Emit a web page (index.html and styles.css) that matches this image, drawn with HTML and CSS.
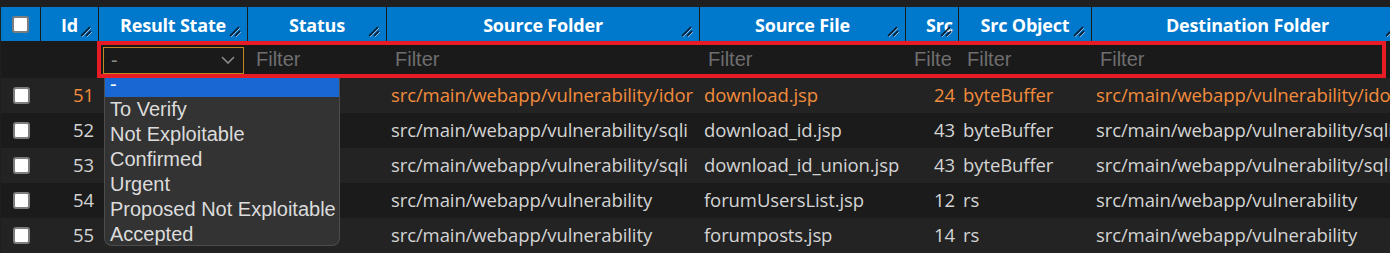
FILE: index.html
```html
<!DOCTYPE html>
<html lang="en">
<head>
    <meta charset="UTF-8">
    <meta name="viewport" content="width=device-width, initial-scale=1.0">
    <title>Results</title>
    <link rel="stylesheet" href="styles.css">
</head>
<body>
    <div class="grid-wrap">
        <div class="row head">
            <div class="hcell"><span class="check"></span></div>
            <div class="hcell">Id<svg class="grip" width="13" height="11" viewBox="0 0 13 11"><path d="M2 11 L11 2 M7 11 L12 6" stroke="#8fb4d6" stroke-width="1"/><path d="M1 10 L10 1 M6 10 L11 5" stroke="#0b1c2e" stroke-width="1.6"/></svg></div>
            <div class="hcell">Result State<svg class="grip" width="13" height="11" viewBox="0 0 13 11"><path d="M2 11 L11 2 M7 11 L12 6" stroke="#8fb4d6" stroke-width="1"/><path d="M1 10 L10 1 M6 10 L11 5" stroke="#0b1c2e" stroke-width="1.6"/></svg></div>
            <div class="hcell">Status<svg class="grip" width="13" height="11" viewBox="0 0 13 11"><path d="M2 11 L11 2 M7 11 L12 6" stroke="#8fb4d6" stroke-width="1"/><path d="M1 10 L10 1 M6 10 L11 5" stroke="#0b1c2e" stroke-width="1.6"/></svg></div>
            <div class="hcell">Source Folder<svg class="grip" width="13" height="11" viewBox="0 0 13 11"><path d="M2 11 L11 2 M7 11 L12 6" stroke="#8fb4d6" stroke-width="1"/><path d="M1 10 L10 1 M6 10 L11 5" stroke="#0b1c2e" stroke-width="1.6"/></svg></div>
            <div class="hcell">Source File<svg class="grip" width="13" height="11" viewBox="0 0 13 11"><path d="M2 11 L11 2 M7 11 L12 6" stroke="#8fb4d6" stroke-width="1"/><path d="M1 10 L10 1 M6 10 L11 5" stroke="#0b1c2e" stroke-width="1.6"/></svg></div>
            <div class="hcell"><span class="clip">Src Line</span><svg class="grip" width="13" height="11" viewBox="0 0 13 11"><path d="M2 11 L11 2 M7 11 L12 6" stroke="#8fb4d6" stroke-width="1"/><path d="M1 10 L10 1 M6 10 L11 5" stroke="#0b1c2e" stroke-width="1.6"/></svg></div>
            <div class="hcell">Src Object<svg class="grip" width="13" height="11" viewBox="0 0 13 11"><path d="M2 11 L11 2 M7 11 L12 6" stroke="#8fb4d6" stroke-width="1"/><path d="M1 10 L10 1 M6 10 L11 5" stroke="#0b1c2e" stroke-width="1.6"/></svg></div>
            <div class="hcell">Destination Folder<svg class="grip" width="13" height="11" viewBox="0 0 13 11"><path d="M2 11 L11 2 M7 11 L12 6" stroke="#8fb4d6" stroke-width="1"/><path d="M1 10 L10 1 M6 10 L11 5" stroke="#0b1c2e" stroke-width="1.6"/></svg></div>
        </div>

        <div class="row filters">
            <div class="fcell"></div>
            <div class="fcell"></div>
            <div class="fcell">
                <div class="select">
                    <span>-</span>
                    <svg width="14" height="8" viewBox="0 0 14 8"><path d="M1 1 L7 7 L13 1" fill="none" stroke="#8a8a8a" stroke-width="1.6"/></svg>
                </div>
            </div>
            <div class="fcell"><input class="filter" placeholder="Filter"></div>
            <div class="fcell"><input class="filter" placeholder="Filter"></div>
            <div class="fcell"><input class="filter" placeholder="Filter"></div>
            <div class="fcell"><input class="filter" placeholder="Filter"></div>
            <div class="fcell"><input class="filter" placeholder="Filter"></div>
            <div class="fcell"><input class="filter" placeholder="Filter"></div>
        </div>

        <div class="row data selected">
            <div class="cell"><span class="check"></span></div>
            <div class="cell num">51</div>
            <div class="cell"></div>
            <div class="cell"></div>
            <div class="cell">src/main/webapp/vulnerability/idor</div>
            <div class="cell">download.jsp</div>
            <div class="cell num">24</div>
            <div class="cell">byteBuffer</div>
            <div class="cell">src/main/webapp/vulnerability/idor</div>
        </div>
        <div class="row data">
            <div class="cell"><span class="check"></span></div>
            <div class="cell num">52</div>
            <div class="cell"></div>
            <div class="cell"></div>
            <div class="cell">src/main/webapp/vulnerability/sqli</div>
            <div class="cell">download_id.jsp</div>
            <div class="cell num">43</div>
            <div class="cell">byteBuffer</div>
            <div class="cell">src/main/webapp/vulnerability/sqli</div>
        </div>
        <div class="row data">
            <div class="cell"><span class="check"></span></div>
            <div class="cell num">53</div>
            <div class="cell"></div>
            <div class="cell"></div>
            <div class="cell">src/main/webapp/vulnerability/sqli</div>
            <div class="cell">download_id_union.jsp</div>
            <div class="cell num">43</div>
            <div class="cell">byteBuffer</div>
            <div class="cell">src/main/webapp/vulnerability/sqli</div>
        </div>
        <div class="row data">
            <div class="cell"><span class="check"></span></div>
            <div class="cell num">54</div>
            <div class="cell"></div>
            <div class="cell"></div>
            <div class="cell">src/main/webapp/vulnerability</div>
            <div class="cell">forumUsersList.jsp</div>
            <div class="cell num">12</div>
            <div class="cell">rs</div>
            <div class="cell">src/main/webapp/vulnerability</div>
        </div>
        <div class="row data">
            <div class="cell"><span class="check"></span></div>
            <div class="cell num">55</div>
            <div class="cell"></div>
            <div class="cell"></div>
            <div class="cell">src/main/webapp/vulnerability</div>
            <div class="cell">forumposts.jsp</div>
            <div class="cell num">14</div>
            <div class="cell">rs</div>
            <div class="cell">src/main/webapp/vulnerability</div>
        </div>

        <!-- open select list -->
        <ul class="dropdown">
            <li class="active">-</li>
            <li>To Verify</li>
            <li>Not Exploitable</li>
            <li>Confirmed</li>
            <li>Urgent</li>
            <li>Proposed Not Exploitable</li>
            <li>Accepted</li>
        </ul>

        <!-- highlight box round the filter row -->
        <div class="highlight"></div>
    </div>
</body>
</html>
```

FILE: styles.css
```css
body {
    margin: 0;
    background-color: #1f1f1f;
    font-family: "Open Sans", "Noto Sans", sans-serif;
    overflow: hidden;
}

.grid-wrap {
    position: relative;
    padding: 7px 0 0 1px;
    width: 1420px;
}

.row {
    display: grid;
    grid-template-columns: 40px 58px 149px 139px 313px 206px 53px 133px 312px;
}

/* header */
.head {
    height: 34px;
    background: #0078cc;
}

.hcell {
    position: relative;
    box-sizing: border-box;
    border-right: 1px solid #1b1b1b;
    padding: 2px 20px 0;
    line-height: 32px;
    text-align: center;
    color: #fff;
    font-weight: 700;
    font-size: 18px;
    letter-spacing: -0.2px;
    white-space: nowrap;
    overflow: hidden;
}

.hcell:first-child {
    display: flex;
    align-items: center;
    justify-content: center;
    padding: 0;
}

.clip {
    display: block;
    overflow: hidden;
    margin-right: -20px;
    text-align: left;
}

.grip {
    position: absolute;
    right: 5px;
    bottom: 4px;
}

.check {
    display: block;
    width: 13px;
    height: 13px;
    background: #fff;
    border: 2px solid #7d7d7d;
    border-radius: 3px;
}

/* filter row */
.filters {
    height: 37px;
    background: #1a1a1a;
}

.fcell {
    box-sizing: border-box;
    padding: 0 4px;
    display: flex;
    align-items: center;
    overflow: hidden;
}

.filter {
    width: 100%;
    min-width: 0;
    box-sizing: border-box;
    border: none;
    background: transparent;
    padding: 0 4px;
    font-family: "Liberation Sans", Arial, sans-serif;
    font-size: 20px;
    color: #ccc;
}

.filter::placeholder {
    color: #6e6e6e;
}

.select {
    width: 100%;
    height: 27px;
    box-sizing: border-box;
    border: 1px solid #c08722;
    display: flex;
    align-items: center;
    justify-content: space-between;
    padding: 0 8px 0 7px;
    margin-top: 1px;
    font-family: "Liberation Sans", Arial, sans-serif;
    font-size: 20px;
    color: #8a8a8a;
}

/* data rows */
.data {
    height: 35px;
    background: #232323;
    color: #d4d4d4;
    font-size: 18.5px;
    letter-spacing: -0.1px;
}

.data:nth-child(even) {
    background: #1b1b1b;
}

.data.selected {
    color: #f28c3c;
}

.cell {
    box-sizing: border-box;
    padding: 0 4px 2px;
    display: flex;
    align-items: center;
    white-space: nowrap;
    overflow: hidden;
}

.cell:first-child {
    justify-content: center;
    padding: 0;
}

.cell.num {
    justify-content: flex-end;
}

.cell:nth-child(2) {
    padding-right: 5px;
}

/* overlays */
.dropdown {
    position: absolute;
    left: 104px;
    top: 78px;
    width: 236px;
    height: 168px;
    box-sizing: border-box;
    margin: 0;
    padding: 0;
    list-style: none;
    background: #333;
    border: 1px solid #4c4c4c;
    border-top: none;
    border-radius: 0 0 8px 8px;
    overflow: hidden;
    font-family: "Liberation Sans", Arial, sans-serif;
    font-size: 20px;
    color: #dcdcdc;
}

.dropdown li {
    height: 25px;
    line-height: 25px;
    padding-left: 5px;
    white-space: nowrap;
}

.dropdown li.active {
    margin-top: -6px;
    background: #1967d2;
    color: #fff;
}

.highlight {
    position: absolute;
    left: 97px;
    top: 41px;
    width: 1289px;
    height: 37px;
    box-sizing: border-box;
    border: 4px solid #e81c24;
}
```
